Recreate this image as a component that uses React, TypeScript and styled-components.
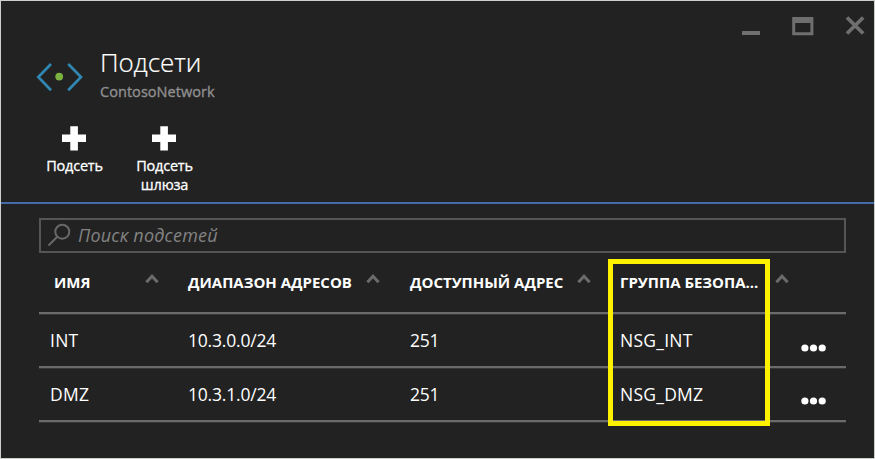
import React from "react";
import styled, { createGlobalStyle } from "styled-components";

const Global = createGlobalStyle`
  *, *::before, *::after { box-sizing: border-box; }
  body { margin: 0; background: #222222; }
`;

const Blade = styled.main`
  position: relative;
  width: 875px;
  height: 459px;
  overflow: hidden;
  border: 1px solid #cccfcb;
  background: #222222;
  color: #ffffff;
  font-family: "Open Sans", "Noto Sans", sans-serif;
`;

const Header = styled.header`
  display: flex;
  justify-content: space-between;
  height: 110px;
  padding: 14px 9px 0 35px;
`;

const Identity = styled.div`
  display: flex;
  gap: 17px;
  padding-top: 28px;
`;

const NetworkGlyph = styled.svg`
  width: 48px;
  height: 30px;
  margin-top: 19px;
`;

const Title = styled.h1`
  margin: 0 0 0 -1px;
  font-size: 26px;
  line-height: 38px;
  font-weight: 300;
  letter-spacing: -0.1px;
  -webkit-text-stroke: 0.2px currentColor;
`;

const Subtitle = styled.div`
  margin: 1px 0 0 -1px;
  color: #8f8f8f;
  font-size: 14.5px;
  line-height: 20px;
  letter-spacing: 0.05px;
  -webkit-text-stroke: 0.35px currentColor;
`;

const WindowControls = styled.div`
  display: flex;
  align-items: flex-start;
`;

const ControlIcon = styled.svg`
  width: 124px;
  height: 22px;
`;

const Toolbar = styled.div`
  display: flex;
  gap: 11px;
  height: 93px;
  padding: 15px 0 0 34px;
  border-bottom: 2px solid #476aa8;
`;

const Command = styled.button`
  display: flex;
  flex-direction: column;
  align-items: center;
  width: 79px;
  padding: 0;
  border: 0;
  background: none;
  color: inherit;
  font-family: inherit;
  font-size: 14.5px;
  line-height: 19px;
  letter-spacing: -0.2px;
  -webkit-text-stroke: 0.3px currentColor;
`;

const PlusGlyph = styled.svg`
  width: 24px;
  height: 25px;
  margin: 0 1px 5px 0;
`;

const Content = styled.section`
  width: 807px;
  margin: 14px 0 0 38px;
`;

const SearchBox = styled.label`
  display: flex;
  align-items: center;
  height: 35px;
  padding-left: 6px;
  border: 2px solid #555555;
`;

const SearchGlyph = styled.svg`
  width: 26px;
  height: 26px;
`;

const SearchInput = styled.input`
  flex: 1;
  padding: 0 0 2px 5px;
  border: 0;
  outline: 0;
  background: none;
  color: #ffffff;
  font: italic 18px "Open Sans", "Noto Sans", sans-serif;
  letter-spacing: 0.2px;
  &::placeholder { color: #838383; opacity: 1; }
`;

const Row = styled.div<{ $head?: boolean }>`
  display: grid;
  grid-template-columns: 149px 222px 210px 181px 45px;
  height: ${(p) => (p.$head ? 61 : 54)}px;
  border-bottom: 2px solid #6b6b6b;
  box-shadow: 0 1px #373737;
`;

const HeadCell = styled.div<{ $inset?: number; $caret: number }>`
  display: flex;
  justify-content: space-between;
  padding: 18px ${(p) => p.$caret}px 0 ${(p) => p.$inset ?? 0}px;
  font-size: 15px;
  line-height: 22px;
  font-weight: 700;
  white-space: nowrap;
`;

const CaretGlyph = styled.svg`
  flex: none;
  width: 14px;
  height: 10px;
  margin-top: 3px;
`;

const Cell = styled.div<{ $inset?: number; $label?: boolean }>`
  padding: 14px 0 0 ${(p) => p.$inset ?? 0}px;
  font-size: 17.5px;
  line-height: 24px;
  letter-spacing: ${(p) => (p.$label ? 0.25 : -0.2)}px;
  white-space: nowrap;
`;

const MenuCell = styled.div`
  padding-top: 30px;

  ${Row}:last-child & {
    padding-top: 29px;
  }
`;

const DotsGlyph = styled.svg`
  display: block;
  width: 26px;
  height: 8px;
`;

const Highlight = styled.div`
  position: absolute;
  left: 607px;
  top: 258px;
  width: 162px;
  height: 167px;
  border: 5px solid #fff200;
  pointer-events: none;
`;

const Plus = () => (
  <PlusGlyph viewBox="0 0 24 25">
    <path d="M8.3 0.3h7.6v8.2H24v7.4h-8.1v8.5H8.3v-8.5H0V8.5h8.3z" fill="#fff" />
  </PlusGlyph>
);

const Caret = () => (
  <CaretGlyph viewBox="0 0 14 10">
    <path d="M1.4 8.2L7 2.2l5.6 6" fill="none" stroke="#6b6b6b" strokeWidth="3" />
  </CaretGlyph>
);

const columns = [
  { label: "ИМЯ", inset: 15, caret: 29 },
  { label: "ДИАПАЗОН АДРЕСОВ", inset: 0, caret: 30 },
  { label: "ДОСТУПНЫЙ АДРЕС", inset: 0, caret: 29 },
  { label: "ГРУППА БЕЗОПА...", inset: 0, caret: 12 },
];

const subnets = [
  { name: "INT", range: "10.3.0.0/24", free: "251", group: "NSG_INT" },
  { name: "DMZ", range: "10.3.1.0/24", free: "251", group: "NSG_DMZ" },
];

export default function App() {
  return (
    <>
      <Global />
      <Blade>
        <Header>
          <Identity>
            <NetworkGlyph viewBox="0 0 48 30">
              <path d="M15 2L2.3 15 15 28.2M32.2 2L45 15 32.2 28.2" fill="none" stroke="#2f87b2" strokeWidth="2.7" />
              <circle cx="23.2" cy="14.6" r="3.9" fill="#7ab341" />
            </NetworkGlyph>
            <div>
              <Title>Подсети</Title>
              <Subtitle>ContosoNetwork</Subtitle>
            </div>
          </Identity>
          <WindowControls>
            <ControlIcon viewBox="0 0 124 22">
              <path d="M1 16h18v4H1z" fill="#6f6f6f" />
              <path d="M51.2 2h21.2v18.2H51.2zM54.2 8v9.3h15.2V8z" fill="#6f6f6f" fillRule="evenodd" />
              <path d="M106 2.5l16.2 16M122.2 2.5L106 18.5" fill="none" stroke="#6f6f6f" strokeWidth="3.7" />
            </ControlIcon>
          </WindowControls>
        </Header>
        <Toolbar>
          <Command><Plus />Подсеть</Command>
          <Command><Plus />Подсеть<br />шлюза</Command>
        </Toolbar>
        <Content>
          <SearchBox>
            <SearchGlyph viewBox="0 0 26 26">
              <circle cx="15.3" cy="8.7" r="7" fill="none" stroke="#686868" strokeWidth="2" />
              <path d="M10.3 13.7L1.5 22.5" stroke="#686868" strokeWidth="2" />
            </SearchGlyph>
            <SearchInput placeholder="Поиск подсетей" />
          </SearchBox>
          <Row $head>
            {columns.map((c) => (
              <HeadCell key={c.label} $inset={c.inset} $caret={c.caret}>
                {c.label}
                <Caret />
              </HeadCell>
            ))}
          </Row>
          {subnets.map((s) => (
            <Row key={s.name}>
              <Cell $inset={11} $label>{s.name}</Cell>
              <Cell>{s.range}</Cell>
              <Cell>{s.free}</Cell>
              <Cell $label>{s.group}</Cell>
              <MenuCell>
                <DotsGlyph viewBox="0 0 26 8">
                  <circle cx="3.9" cy="4" r="3.6" fill="#fff" />
                  <circle cx="12.5" cy="4" r="3.6" fill="#fff" />
                  <circle cx="21.2" cy="4" r="3.6" fill="#fff" />
                </DotsGlyph>
              </MenuCell>
            </Row>
          ))}
        </Content>
        <Highlight />
      </Blade>
    </>
  );
}
